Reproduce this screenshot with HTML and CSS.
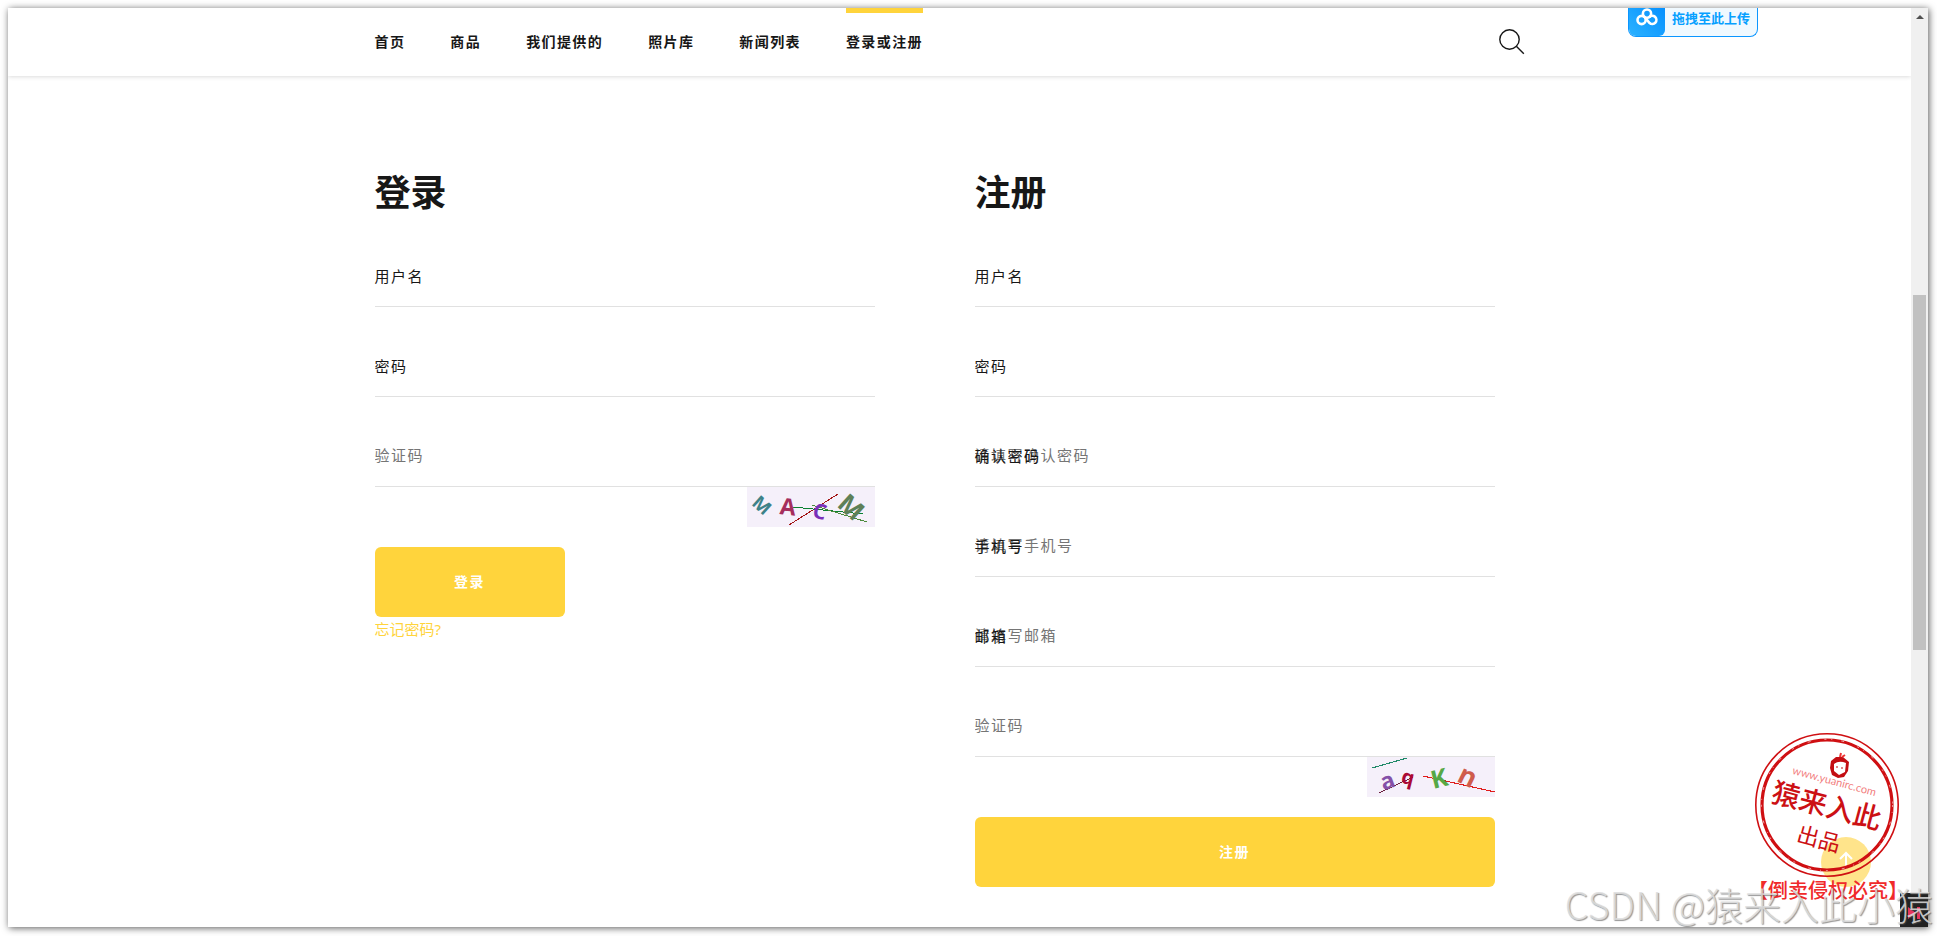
FILE: index.html
```
<!DOCTYPE html>
<html lang="zh-CN">
<head>
  <meta charset="UTF-8">
  <title>登录或注册</title>
  <meta name="viewport" content="width=device-width, initial-scale=1">
  <link rel="stylesheet" href="styles.css">
</head>
<body>
  <div class="window">
    <div class="page">
      <header class="header">
        <div class="container header-inner">
          <nav class="nav">
            <a href="#">首页</a>
            <a href="#">商品</a>
            <a href="#">我们提供的</a>
            <a href="#">照片库</a>
            <a href="#">新闻列表</a>
            <a href="#" class="active">登录或注册</a>
          </nav>
          <button class="search" type="button" aria-label="搜索">
            <svg width="26" height="26" viewBox="0 0 26 26" fill="none" stroke="#171717" stroke-width="1.4">
              <circle cx="10.5" cy="10.5" r="9.7"/>
              <path d="M17.3 17.3L24.8 24.8"/>
            </svg>
          </button>
        </div>
      </header>

      <main class="container forms">
        <form class="login">
          <h2>登录</h2>
          <div class="field">
            <label for="login-name">用户名</label>
            <input id="login-name" type="text">
          </div>
          <div class="field">
            <label for="login-pwd">密码</label>
            <input id="login-pwd" type="password">
          </div>
          <div class="field">
            <input type="text" placeholder="验证码" aria-label="验证码">
          </div>
          <svg class="captcha" width="128" height="40" viewBox="0 0 128 40">
            <path d="M42 38L91 7" stroke="#a31515" fill="none"/>
            <path d="M46 20L116 27" stroke="#0a8030" fill="none"/>
            <path d="M65 18L120 35" stroke="#4b8b3b" fill="none"/>
            <text x="-9" y="7" font-size="19" fill="#3d8288" transform="translate(15 18) rotate(42)">M</text>
            <text x="-8" y="8" font-size="23" fill="#a52e5c" transform="translate(41 20) rotate(6)">A</text>
            <text x="-7" y="7" font-size="21" fill="#7a30b8" transform="translate(73 25) rotate(14)">C</text>
            <text x="-12" y="9" font-size="26" fill="#5e8058" transform="translate(104 20) rotate(42)">M</text>
          </svg>
          <button class="btn" type="submit">登录</button>
          <a class="forgot" href="#">忘记密码?</a>
        </form>

        <form class="register">
          <h2>注册</h2>
          <div class="field">
            <label for="reg-name">用户名</label>
            <input id="reg-name" type="text">
          </div>
          <div class="field">
            <label for="reg-pwd">密码</label>
            <input id="reg-pwd" type="password">
          </div>
          <div class="field">
            <label for="reg-pwd2">确认密码</label>
            <input id="reg-pwd2" type="password" placeholder="请填写确认密码">
          </div>
          <div class="field">
            <label for="reg-phone">手机号</label>
            <input id="reg-phone" type="text" placeholder="请填写手机号">
          </div>
          <div class="field">
            <label for="reg-mail">邮箱</label>
            <input id="reg-mail" type="text" placeholder="请填写邮箱">
          </div>
          <div class="field">
            <input type="text" placeholder="验证码" aria-label="验证码">
          </div>
          <svg class="captcha" width="128" height="40" viewBox="0 0 128 40">
            <path d="M5 11L40 1" stroke="#1f8a68" fill="none"/>
            <path d="M12 36L46 20" stroke="#6b2040" fill="none"/>
            <path d="M56 19L128 35" stroke="#e01c1c" fill="none"/>
            <text x="-6" y="6" font-size="23" fill="#8450a8" transform="translate(20 26) rotate(-20)">a</text>
            <text x="-6" y="4" font-size="20" fill="#ab0a35" transform="translate(40 23) rotate(14)">q</text>
            <text x="-9" y="8" font-size="25" fill="#56a846" transform="translate(73 22) rotate(-14)">K</text>
            <text x="-8" y="7" font-size="27" fill="#cf5c4c" transform="translate(99 21) rotate(26)">n</text>
          </svg>
          <button class="btn btn-block" type="submit">注册</button>
        </form>
      </main>
    </div>

    <div class="scrollbar">
      <span class="scroll-up"></span>
      <span class="scroll-thumb"></span>
    </div>

    <!-- 网盘拖拽上传 -->
    <div class="upload">
      <span class="upload-icon">
        <svg width="22" height="18" viewBox="0 0 22 18" fill="none" stroke="#fff" stroke-width="2.6">
          <circle cx="11" cy="5.6" r="4.1"/>
          <circle cx="5.6" cy="12" r="4.1"/>
          <path d="M13.2 9.2A4.1 4.1 0 1 1 13.6 15L9 9.5"/>
        </svg>
      </span>
      <span class="upload-text">拖拽至此上传</span>
    </div>

    <button class="to-top" type="button" aria-label="返回顶部">
      <svg width="16" height="18" viewBox="0 0 16 18" fill="none" stroke="#fff" stroke-width="2">
        <path d="M8 18V2M2 8L8 2L14 8"/>
      </svg>
    </button>

    <div class="player">
      <svg width="12" height="12" viewBox="0 0 12 12" fill="#e8365d">
        <path d="M0 0L8 6L0 12Z"/>
        <path d="M9 0H12V12H9Z"/>
      </svg>
    </div>

    <!-- 印章 -->
    <svg class="stamp" width="152" height="174" viewBox="0 0 152 174">
      <g fill="none" stroke="#cf0f12">
        <circle cx="75" cy="75" r="71.2" stroke-width="1.6"/>
        <circle cx="75" cy="75" r="65" stroke-width="3.2"/>
        <circle cx="75" cy="75" r="65.6" stroke="#fff" stroke-width="0.6" stroke-dasharray="2 5 1 9 3 14"/>
      </g>
      <path d="M79 31L84 27L91 27L97 32L96 41L92 47L86 48L80 45L78 38Z" fill="#c30d12"/>
      <path d="M82 34Q87 30 94 33L93 42L87 45L82 41Z" fill="#fff"/>
      <path d="M84 37H86M89 38H91" stroke="#c30d12"/>
      <path d="M88 27L89 23M90 27L93 25" stroke="#e33" stroke-width="2"/>
      <g transform="rotate(15 75 75)" text-anchor="middle">
        <text x="76" y="54" class="stamp-site">www.yuanirc.com</text>
        <text x="75" y="86" class="stamp-name">猿来入此</text>
        <text x="76" y="118" class="stamp-out">出品</text>
      </g>
      <text x="76" y="168" text-anchor="middle" class="stamp-note">【倒卖侵权必究】</text>
    </svg>
  </div>
  <div class="watermark">CSDN @猿来入此小猿</div>
</body>
</html>
```
FILE: styles.css
```
* { box-sizing: border-box; margin: 0; padding: 0; }
body {
  font-family: "Noto Sans", "Noto Sans CJK SC", sans-serif;
  font-size: 15px;
  color: #171717;
  background: #fff;
  padding: 8px 9px 9px 8px;
  min-height: 100vh;
  display: flex;
}
a { text-decoration: none; color: inherit; }
button { font-family: inherit; border: none; cursor: pointer; }

.window {
  position: relative;
  flex: 1;
  display: flex;
  background: #fff;
  box-shadow: 1px 1px 7px rgba(0,0,0,0.65);
}
.page { flex: 1; }
.container {
  max-width: 1170px;
  margin: 0 auto;
}

.header {
  background: #fff;
  box-shadow: 0 0 5px rgba(0,0,0,0.2);
  clip-path: inset(0 0 -8px 0);
}
.header-inner {
  display: flex;
  justify-content: space-between;
  align-items: center;
  height: 68px;
  padding-right: 20px;
}
.nav {
  display: flex;
  gap: 45px;
  height: 100%;
}
.nav a {
  font-size: 14px;
  font-weight: 700;
  letter-spacing: 0.1em;
  line-height: 58px;
  border-top: 5px solid transparent;
}
.nav .active { border-top-color: #ffd43c; }
.search {
  width: 26px;
  height: 26px;
  background: none;
}

.forms {
  display: grid;
  grid-template-columns: 50fr 52fr;
  gap: 100px;
  padding: 95px 50px 40px 0;
}
.login, .register {
  display: flex;
  flex-direction: column;
  align-items: flex-start;
}
h2 {
  font-size: 36px;
  line-height: 44px;
  font-weight: 700;
  margin-bottom: 32px;
}
.field {
  position: relative;
  width: 100%;
  margin-bottom: 30px;
}
.field label {
  position: absolute;
  left: 0;
  top: 0;
  line-height: 58px;
  letter-spacing: 0.1em;
  pointer-events: none;
}
.field input {
  display: block;
  width: 100%;
  height: 60px;
  padding-bottom: 4px;
  border: none;
  border-bottom: 1px solid #e1e1e1;
  background: transparent;
  font-family: inherit;
  font-size: 15px;
  letter-spacing: 0.1em;
  outline: none;
}
.field input::placeholder { color: #757575; }
.field:has(+ .captcha) { margin-bottom: 0; }
.captcha {
  align-self: flex-end;
  background: #f5f0fa;
  margin-bottom: 20px;
  font-family: "Open Sans", sans-serif;
  font-weight: 700;
  shape-rendering: crispEdges;
}
.btn {
  width: 190px;
  height: 70px;
  padding-bottom: 2px;
  border-radius: 6px;
  background: #ffd43c;
  color: #fff;
  font-size: 14px;
  font-weight: 700;
  letter-spacing: 0.1em;
}
.btn-block { width: 100%; }
.forgot {
  color: #ffd43c;
  line-height: 24px;
}

.scrollbar {
  width: 17px;
  background: #f0f0f0;
  display: flex;
  flex-direction: column;
  align-items: center;
}
.scroll-up {
  margin-top: 7px;
  border: 4px solid transparent;
  border-top: none;
  border-bottom: 4px solid #505050;
}
.scroll-thumb {
  width: 13px;
  height: 355px;
  margin-top: 276px;
  background: #c1c1c1;
}

.upload {
  position: absolute;
  top: 0;
  right: 170px;
  display: flex;
  width: 130px;
  height: 29px;
  border: 1px solid #0c96ff;
  border-top: none;
  border-radius: 0 0 8px 8px;
  background: #f0f9ff;
  overflow: hidden;
}
.upload-icon {
  width: 36px;
  padding-left: 7px;
  background: linear-gradient(45deg, #2cb2ff, #0590ff);
  border-radius: 0 0 6px 0;
}
.upload-text {
  flex: 1;
  text-align: center;
  font-size: 13px;
  line-height: 20px;
  font-weight: 700;
  color: #06a0ff;
}

.to-top {
  position: absolute;
  right: 57px;
  bottom: 40px;
  width: 50px;
  height: 50px;
  border-radius: 50%;
  background: #ffe48b;
}
.player {
  position: absolute;
  right: 0;
  bottom: 0;
  width: 28px;
  height: 34px;
  padding: 10px 8px;
  background: #222;
}

.stamp {
  position: absolute;
  right: 24px;
  bottom: 23px;
  overflow: visible;
  pointer-events: none;
}
.stamp-site { font-family: Lato, sans-serif; font-size: 11px; fill: #f28080; }
.stamp-name { font-size: 28px; font-weight: 500; fill: #cc1014; }
.stamp-out { font-size: 22px; fill: #cc1014; }
.stamp-note { font-size: 20px; font-weight: 500; fill: #f02a2a; }

.watermark {
  position: absolute;
  right: 4px;
  bottom: 4px;
  font-family: "Noto Sans CJK SC", sans-serif;
  font-size: 38px;
  font-weight: 300;
  line-height: 56px;
  color: rgba(222,222,222,0.85);
  text-shadow: 1px 1px 1px rgba(80,80,80,0.6);
  white-space: nowrap;
  pointer-events: none;
}
```
